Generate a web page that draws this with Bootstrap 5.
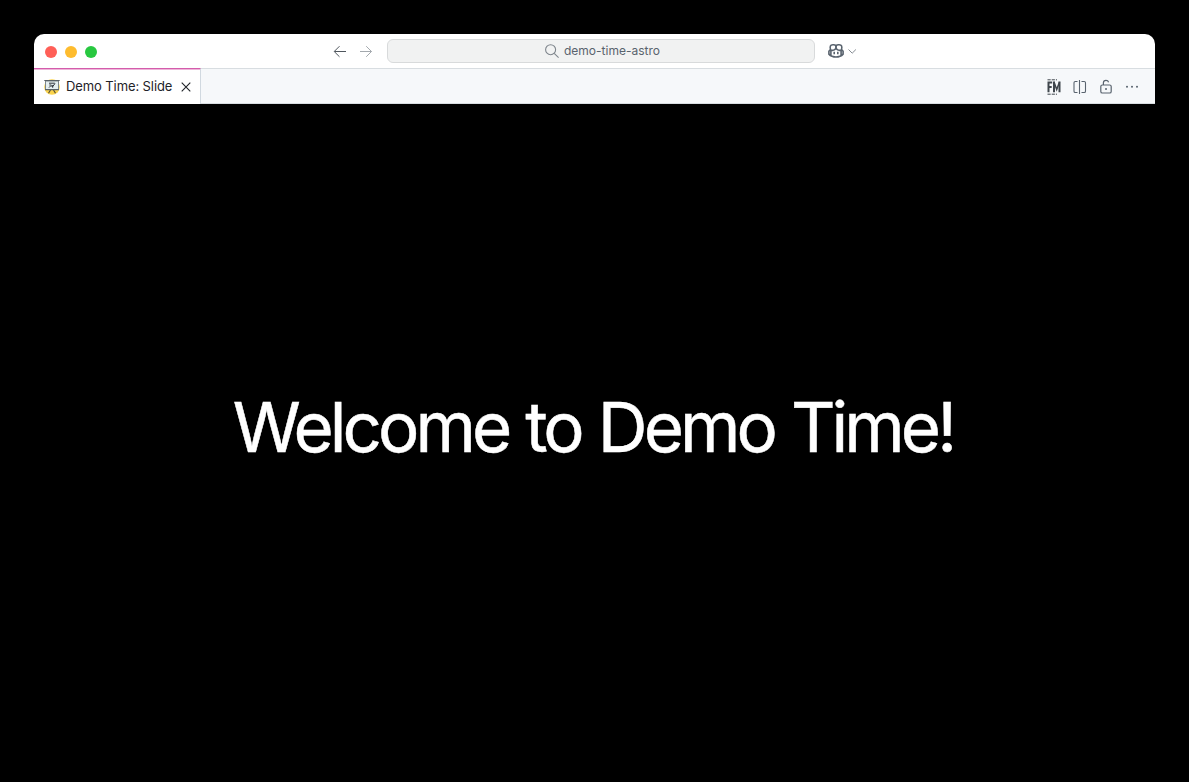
<!DOCTYPE html>
<html lang="en">
<head>
<meta charset="utf-8">
<meta name="viewport" content="width=device-width, initial-scale=1">
<title>Demo Time: Slide</title>
<link href="https://cdn.jsdelivr.net/npm/bootstrap@5.3.0/dist/css/bootstrap.min.css" rel="stylesheet">
<style>
body { background: #000; font-family: Inter, "Liberation Sans", sans-serif; font-size: 13px; line-height: 1; }
svg { display: block; flex: none; }
.stage { padding: 34px; }
.app-window { border-radius: 10px 10px 0 0; }
.title-bar { height: 35px; background: #fff; border-bottom: 1px solid #d8dde1; padding-left: 11px; }
.lights { gap: 8px; width: 288px; padding-top: 2px; }
.light { width: 12px; height: 12px; border-radius: 50%; }
.light-close { background: #ff5f57; }
.light-min { background: #febc2e; }
.light-max { background: #28c840; }
.history { gap: 10px; }
.command-box { width: 428px; height: 24px; margin: 0 13px 0 12px; padding-left: 2px; background: #f1f2f2; border: 1px solid #d8dadb; border-radius: 6px; color: #59636e; font-size: 12px; gap: 4px; }
.tab-bar { height: 35px; background: #f6f8fa; border-bottom: 1px solid #d8dde1; }
.editor-tab { width: 167px; height: 36px; margin-top: -1px; padding: 1px 0 0 10px; background: #fff; border-top: 1px solid #d45cac; box-shadow: inset 0 1px #edb5d9; border-right: 1px solid #d1d9e0; color: #1f2328; }
.tab-label { margin-left: 6px; padding-bottom: 1px; letter-spacing: -.1px; white-space: nowrap; width: 114px; }
.actions { gap: 10px; padding: 2px 15px 0 0; color: #59636e; }
.slide-area { background: #000; padding-top: 2px; }
.slide-title { color: #fff; font-size: 69px; font-weight: 400; line-height: 1; letter-spacing: -3.9px; word-spacing: 1.4px; padding-right: 3px; white-space: nowrap; -webkit-text-stroke: .5px #fff; }
</style>
</head>
<body>
<div class="stage vh-100 d-flex flex-column">
  <main class="app-window d-flex flex-column flex-grow-1 overflow-hidden">
    <header class="title-bar d-flex align-items-center flex-shrink-0">
      <div class="lights d-flex">
        <span class="light light-close"></span>
        <span class="light light-min"></span>
        <span class="light light-max"></span>
      </div>
      <div class="history d-flex">
        <svg width="16" height="16" viewBox="0 0 16 16" fill="none" stroke="#4f565d"><path d="M13 8.5H1.5M6.5 3.2 1.2 8.5l5.3 5.3"/></svg>
        <svg width="16" height="16" viewBox="0 0 16 16" fill="none" stroke="#a4a9ae"><path d="M1 8.5H12.5M7.2 3.2l5.3 5.3-5.3 5.3"/></svg>
      </div>
      <div class="command-box d-flex align-items-center justify-content-center">
        <svg width="16" height="16" viewBox="0 0 16 16" fill="none" stroke="#7e858c" stroke-width="1.1"><circle cx="6.6" cy="6.7" r="5"/><path d="m10.2 10.3 4.4 4.4"/></svg>
        <span>demo-time-astro</span>
      </div>
      <svg width="16" height="16" viewBox="0 0 16 16" fill="none" stroke="#59636e" stroke-width="1.6"><path d="M7.8 2.5C6.7 1.3 3 1.4 2.4 3.1 2 4.3 2.1 6 2.8 6.8c1 .9 3.5.6 4.4-.5.8-1 .8-2.6.6-3.8zm.4 0c1.1-1.2 4.8-1.1 5.4.6.4 1.2.3 2.9-.4 3.7-1 .9-3.5.6-4.4-.5-.8-1-.8-2.6-.6-3.8zM2.4 6.4.9 8.3v2.8c1.8 2 4.5 2.9 7.1 2.9s5.3-.9 7.1-2.9V8.3l-1.5-1.9M2.9 7v5.2M13.1 7v5.2M6.2 8.8v2.4M9.8 8.8v2.4"/></svg>
      <svg width="16" height="16" viewBox="0 0 16 16" fill="none" stroke="#858c93"><path d="m4.5 6.5 3.7 3.7 3.7-3.7"/></svg>
    </header>
    <nav class="tab-bar d-flex justify-content-between flex-shrink-0">
      <div class="editor-tab d-flex align-items-center">
        <svg width="16" height="16" viewBox="0 0 16 16"><circle cx="8" cy="8" r="7.8" fill="#fbd44c"/><path d="m6.5 11-2 3.2M9.5 11l2 3.2" stroke="#5a5236" stroke-width="1.2"/><path d="M1.5 2h13v8.5h-13z" fill="#e4eef0" stroke="#7c8588"/><path d="M.3 1.5h15.4M1 10.6h14" stroke="#596166" stroke-width="1.1"/><path d="M5 4.2h5.8M5 8.6l2-2 1.5 1.2L11 4.5M5.3 6h2M8.7 6v2.7" fill="none" stroke="#30363c"/></svg>
        <span class="tab-label">Demo Time: Slide</span>
        <svg width="12" height="12" viewBox="0 0 12 12" fill="none" stroke="#1f2328" stroke-width="1.1"><path d="m1.7 1.7 8.6 8.6m0-8.6-8.6 8.6"/></svg>
      </div>
      <div class="actions d-flex align-items-center">
        <svg width="16" height="16" viewBox="0 0 16 16" fill="none" stroke="#3f464c"><path d="M1.5 .8H11M1.5 15.2H11" stroke-dasharray="3.2 1"/><path d="M2.5 13.2V3M1.5 3.5H6.2M3 8h2.7M8 13.2V2.5M13.5 13.2V2.5" stroke-width="2"/><path d="m8 3 2.7 7.5L13.5 3" stroke-width="1.5"/></svg>
        <svg width="16" height="16" viewBox="0 0 16 16" fill="none" stroke="currentColor" stroke-width="1.1"><path d="M7.5 1v14M5.5 2.5H3.3q-1.3 0-1.3 1.3v8.4q0 1.3 1.3 1.3h2.2M9.5 2.5h2.7q1.3 0 1.3 1.3v8.4q0 1.3-1.3 1.3H9.5"/></svg>
        <svg width="16" height="16" viewBox="0 0 16 16" fill="none" stroke="currentColor" stroke-width="1.2"><rect x="2.8" y="6" width="10.4" height="8" rx="1.6"/><path d="M5.4 6V3.8Q5.4 1.4 8 1.4q2 0 2.6 1.8"/><circle cx="8" cy="10" r="1" fill="currentColor" stroke="none"/></svg>
        <svg width="16" height="16" viewBox="0 0 16 16" fill="currentColor"><circle cx="3" cy="7.7" r="1"/><circle cx="8" cy="7.7" r="1"/><circle cx="13" cy="7.7" r="1"/></svg>
      </div>
    </nav>
    <section class="slide-area flex-grow-1 d-flex align-items-center justify-content-center">
      <h1 class="slide-title mb-0">Welcome to Demo Time!</h1>
    </section>
  </main>
</div>
<script src="https://cdn.jsdelivr.net/npm/bootstrap@5.3.0/dist/js/bootstrap.bundle.min.js"></script>
</body>
</html>
